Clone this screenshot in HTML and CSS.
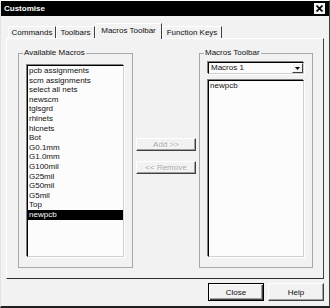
FILE: index.html
```html
<!DOCTYPE html>
<html lang="en">
<head>
  <meta charset="UTF-8">
  <meta name="viewport" content="width=device-width, initial-scale=1.0">
  <title>Customise</title>
  <link rel="stylesheet" href="styles.css">
</head>
<body>
  <div class="window">
    <div class="titlebar">
      <span class="title">Customise</span>
      <span class="close-x">
        <svg width="7" height="7" viewBox="0 0 7 7"><path d="M0.5 0.5 L6.5 6.5 M6.5 0.5 L0.5 6.5" stroke="#000" stroke-width="1.7"/></svg>
      </span>
    </div>

    <div class="body">
      <div class="tabs">
        <div class="tab tab-commands">Commands</div>
        <div class="tab tab-toolbars">Toolbars</div>
        <div class="tab tab-macros active">Macros Toolbar</div>
        <div class="tab tab-keys">Function Keys</div>
      </div>

      <div class="panel">
        <fieldset class="group group-left">
          <legend>Available Macros</legend>
          <ul class="listbox">
            <li>pcb assignments</li>
            <li>scm assignments</li>
            <li>select all nets</li>
            <li>newscm</li>
            <li>tglsgrd</li>
            <li>rhlnets</li>
            <li>hlcnets</li>
            <li>Bot</li>
            <li>G0.1mm</li>
            <li>G1.0mm</li>
            <li>G100mil</li>
            <li>G25mil</li>
            <li>G50mil</li>
            <li>G5mil</li>
            <li>Top</li>
            <li class="selected">newpcb</li>
          </ul>
        </fieldset>

        <div class="actions">
          <button class="btn" disabled>Add &gt;&gt;</button>
          <button class="btn" disabled>&lt;&lt; Remove</button>
        </div>

        <fieldset class="group group-right">
          <legend>Macros Toolbar</legend>
          <div class="combo">
            <span class="combo-text">Macros 1</span>
            <span class="combo-btn">
              <svg width="5" height="3" viewBox="0 0 5 3"><path d="M0 0 H5 L2.5 3 Z" fill="#000"/></svg>
            </span>
          </div>
          <ul class="listbox">
            <li>newpcb</li>
          </ul>
        </fieldset>
      </div>

      <div class="footer">
        <button class="btn btn-default">Close</button>
        <button class="btn">Help</button>
      </div>
    </div>
  </div>
</body>
</html>
```

FILE: styles.css
```css
body {
  margin: 0;
  background: #ffffff;
  font-family: "Liberation Sans", Arial, sans-serif;
  font-size: 8px;
  color: #111;
}
.window {
  width: 330px;
  height: 308px;
  box-sizing: border-box;
  background: #f2f2f2;
  border-style: solid;
  border-width: 1px 1px 2px 1px;
  border-color: #ffffff #404040 #202020 #e4e4e4;
  display: flex;
  flex-direction: column;
}
.titlebar {
  height: 15px;
  background: #000;
  color: #fff;
  font-weight: bold;
  display: flex;
  align-items: center;
  justify-content: space-between;
  padding: 0 4px 0 3px;
}
.close-x {
  width: 11px;
  height: 11px;
  background: #f4f4f4;
  display: flex;
  align-items: center;
  justify-content: center;
}
.body {
  padding: 7px 5px 0 5px;
}

/* tabs */
.tabs {
  display: flex;
  height: 16px;
  margin: 0 0 -1px 2px;
  position: relative;
  z-index: 1;
}
.tab {
  height: 12px;
  margin-top: 3px;
  box-sizing: border-box;
  border-style: solid;
  border-width: 1px 1px 0 1px;
  border-color: #fff #404040 transparent #fff;
  background: #f2f2f2;
  line-height: 11px;
  text-align: center;
}
.tab-commands { width: 48px; }
.tab-toolbars { width: 39px; }
.tab-macros { width: 67px; }
.tab-keys { width: 60px; }
.tab.active {
  height: 16px;
  margin-top: 0;
  line-height: 13px;
}

/* panel */
.panel {
  height: 241px;
  box-sizing: border-box;
  display: flex;
  padding: 9px 10px 10px 11px;
  border: 1px solid;
  border-color: #fff #404040 #303030 #fff;
}
.group {
  margin: 0;
  min-width: 0;
  box-sizing: border-box;
  border: 1px solid #a8a8a8;
  display: flex;
  flex-direction: column;
}
.group legend {
  line-height: 10px;
  padding: 0 1px;
  margin-left: -4px;
}
.group-left {
  width: 115px;
  padding: 7px 8px 10px 8px;
}
.group-right {
  width: 114px;
  padding: 4px 8px 10px 8px;
}
.listbox {
  flex: 1;
  list-style: none;
  margin: 0;
  padding: 0;
  background: #fcfcfc;
  border: 1px solid;
  border-color: #000 #d0d0d0 #d0d0d0 #000;
  box-shadow: -1px -1px 0 #808080, 1px 1px 0 #fff;
  line-height: 9.6px;
}
.listbox li {
  padding-left: 1px;
  white-space: nowrap;
}
.listbox li.selected {
  background: #000;
  color: #fff;
}

/* combo */
.combo {
  height: 12px;
  box-sizing: border-box;
  display: flex;
  background: #fcfcfc;
  border: 1px solid;
  border-color: #000 #d0d0d0 #d0d0d0 #000;
  box-shadow: -1px -1px 0 #808080, 1px 1px 0 #fff;
  margin-bottom: 6px;
}
.combo-text {
  padding-left: 2px;
  line-height: 10px;
}
.combo-btn {
  margin-left: auto;
  width: 11px;
  box-sizing: border-box;
  background: #f2f2f2;
  border: 1px solid;
  border-color: #fff #404040 #404040 #fff;
  display: flex;
  align-items: center;
  justify-content: center;
}

/* buttons */
.actions {
  width: 60px;
  margin: 0 3px;
  padding-top: 90px;
  display: flex;
  flex-direction: column;
  gap: 10px;
}
.btn {
  font: inherit;
  height: 13px;
  padding: 0;
  background: #f2f2f2;
  color: #111;
  border: 1px solid;
  border-color: #fff #404040 #404040 #fff;
  box-shadow: inset -1px -1px #a0a0a0;
}
.btn:disabled {
  color: #a8a8a8;
  text-shadow: 1px 1px #fff;
}
.footer {
  display: flex;
  justify-content: flex-end;
  gap: 4px;
  margin-top: 4px;
}
.footer .btn {
  width: 56px;
  height: 18px;
}
.btn-default {
  border-color: #000;
  box-shadow: inset 1px 1px #fff, inset -1px -1px #404040, inset -2px -2px #a0a0a0;
}
```
